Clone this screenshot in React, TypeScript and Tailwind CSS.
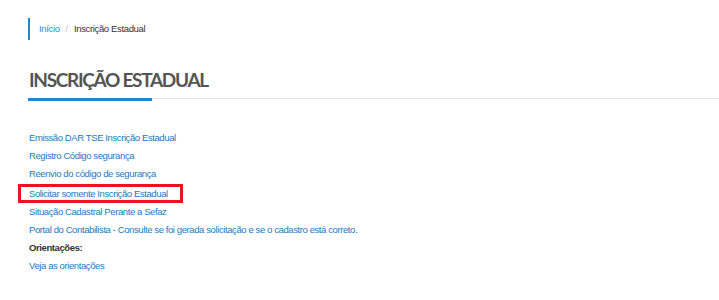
const links = [
  'Emissão DAR TSE Inscrição Estadual',
  'Registro Código segurança',
  'Reenvio do código de segurança',
  'Solicitar somente Inscrição Estadual',
  'Situação Cadastral Perante a Sefaz',
  'Portal do Contabilista - Consulte se foi gerada solicitação e se o cadastro está correto.',
];

export default function App() {
  return (
    <div className="h-[300px] w-[719px] overflow-hidden bg-white font-['Liberation_Sans',Arial,sans-serif]">
      <div className="pl-7 pt-[18px]">
        <div className="flex h-[22px] items-center gap-[6px] border-l-2 border-[#1e88d0] pl-[9px] text-[9.5px] tracking-[-0.35px]">
          <a className="text-[#2a8fd4]">Início</a>
          <span className="text-[#c4c4c4]">/</span>
          <span className="text-[#333]">Inscrição Estadual</span>
        </div>
      </div>

      <div className="mt-[26px] pl-7">
        <h1 className="pl-px font-['Lato',sans-serif] text-[19px] font-bold leading-[28px] tracking-[-1.3px] text-[#555]">
          INSCRIÇÃO ESTADUAL
        </h1>
        <div className="mt-[4px] flex items-start">
          <div className="h-[3px] w-[124px] bg-[#1e88d0]" />
          <div className="h-px flex-1 bg-[#e3e3e3]" />
        </div>
      </div>

      <div className="mt-[28px] flex flex-col pl-[29px] text-[9.5px] leading-[18.2px] tracking-[-0.4px]">
        {links.map((l) => (
          <div key={l}>
            {l.startsWith('Solicitar') ? (
              <a className="-ml-[11px] inline-block border-[3px] border-[#e8141e] pl-2 pr-[12px] leading-[13px] text-[#1a7bbf]">
                {l}
              </a>
            ) : (
              <a className="text-[#1a7bbf]">{l}</a>
            )}
          </div>
        ))}
        <div className="font-bold text-[#333]">Orientações:</div>
        <div>
          <a className="text-[#1a7bbf]">Veja as orientações</a>
        </div>
      </div>
    </div>
  );
}
